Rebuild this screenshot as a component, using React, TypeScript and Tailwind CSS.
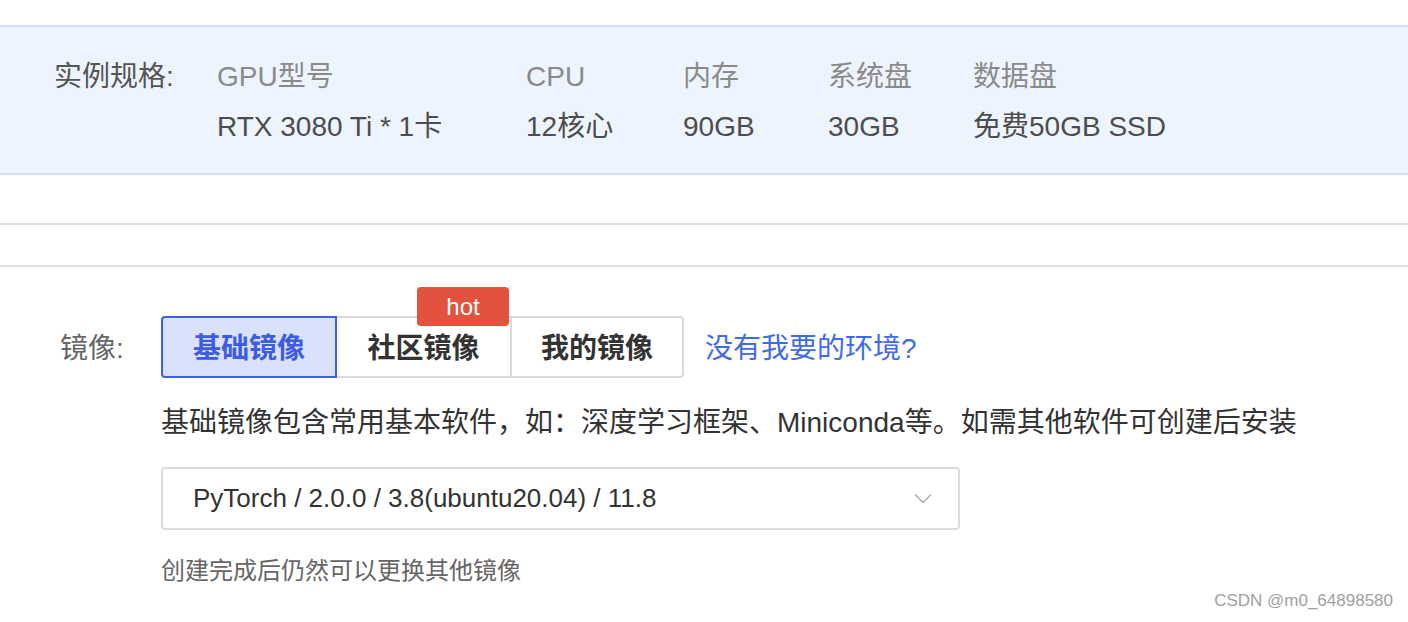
import type React from "react";

const specs = [
  { label: "GPU型号", value: "RTX 3080 Ti * 1卡", w: "w-[309px]" },
  { label: "CPU", value: "12核心", w: "w-[157px]" },
  { label: "内存", value: "90GB", w: "w-[145px]" },
  { label: "系统盘", value: "30GB", w: "w-[145px]" },
  { label: "数据盘", value: "免费50GB SSD", w: "w-[240px]" },
];

const font = { fontFamily: '"Liberation Sans", "Noto Sans CJK SC", sans-serif' };

const Chevron: React.FC = () => (
  <svg width="18" height="11" viewBox="0 0 18 11" fill="none">
    <path d="M1 1.5 L9 9.5 L17 1.5" stroke="#a8a8ad" strokeWidth="1.4" />
  </svg>
);

export default function App() {
  return (
    <div className="relative w-full h-[622px] overflow-hidden bg-white" style={font}>
      <div className="h-[25px]" />

      {/* instance spec panel */}
      <div className="flex border-y-2 border-[#cfe1fa] bg-[#edf4fe] pl-[54px] pt-[25px] pb-[21px] text-[28px]">
        <div className="w-[163px] h-[50px] leading-[50px] text-[#555]">实例规格:</div>
        {specs.map((s) => (
          <div key={s.label} className={`${s.w} flex flex-col`}>
            <span className="h-[50px] leading-[50px] text-[#8a8a8a]">{s.label}</span>
            <span className="h-[50px] leading-[50px] text-[#4d4d4d]">{s.value}</span>
          </div>
        ))}
      </div>

      <div className="h-[48px]" />
      <div className="h-[2px] bg-[#dfdfe3]" />
      <div className="h-[40px]" />
      <div className="h-[2px] bg-[#dfdfe3]" />

      {/* image section */}
      <div className="pt-[49px]">
        <div className="flex items-center h-[62px] text-[28px]">
          <div className="w-[161px] pl-[60px] pt-[3px] text-[#666]">镜像:</div>
          <div className="flex h-[62px]">
            <button className="w-[176px] h-full pt-[3px] rounded-l-[4px] border-2 border-[#3d5fe6] bg-[#d9e1fb] font-semibold text-[#3b5ce3]">
              基础镜像
            </button>
            <div className="relative w-[173px] h-full">
              <button className="w-full h-full pt-[3px] border-y-2 border-[#d9d9de] font-semibold text-[#333]">社区镜像</button>
              <span className="absolute left-[80px] top-[-29px] w-[92px] h-[39px] rounded-[4px] bg-[#e3523d] text-white text-[24px] font-medium leading-[39px] text-center">
                hot
              </span>
            </div>
            <button className="w-[174px] h-full pt-[3px] rounded-r-[4px] border-2 border-[#d9d9de] font-semibold text-[#333]">
              我的镜像
            </button>
          </div>
          <a className="ml-[21px] pt-[3px] text-[#3f6aea]">没有我要的环境?</a>
        </div>

        <div className="pl-[161px]">
          <p className="mt-[25px] h-[40px] leading-[40px] text-[28px] text-[#333]">
            基础镜像包含常用基本软件，如：深度学习框架、Miniconda等。如需其他软件可创建后安装
          </p>
          <div className="mt-[24px] flex items-center justify-between w-[799px] h-[63px] rounded-[4px] border-2 border-[#dcdce0] pl-[30px] pr-[26px]">
            <span className="text-[26px] text-[#333]">PyTorch / 2.0.0 / 3.8(ubuntu20.04) / 11.8</span>
            <Chevron />
          </div>
          <p className="mt-[25px] h-[32px] leading-[32px] text-[24px] text-[#666]">创建完成后仍然可以更换其他镜像</p>
        </div>
      </div>

      <span className="absolute right-[15px] bottom-[9px] text-[17px] text-[#a0a0a0]">CSDN @m0_64898580</span>
    </div>
  );
}
